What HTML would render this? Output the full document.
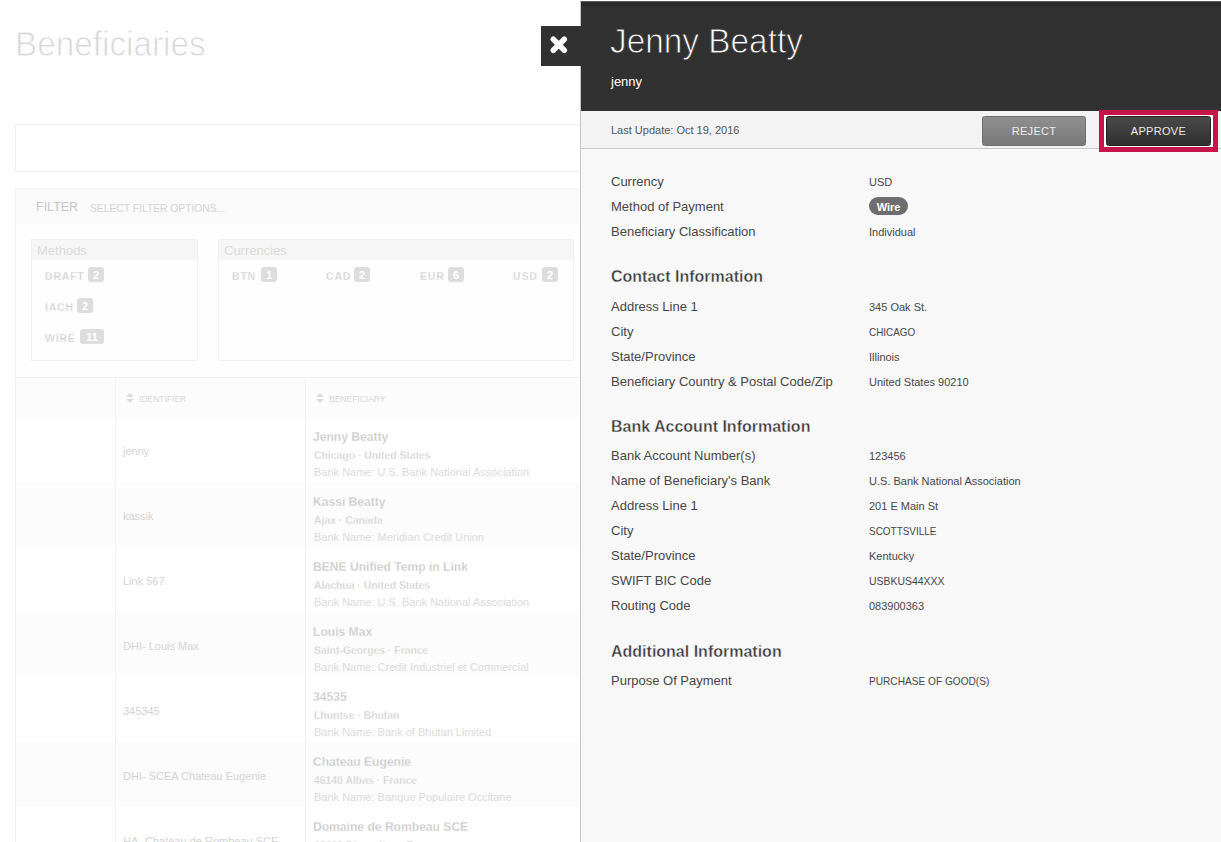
<!DOCTYPE html>
<html><head><meta charset="utf-8">
<style>
html,body{margin:0;padding:0;}
body{width:1221px;height:842px;overflow:hidden;position:relative;background:#fff;font-family:"Liberation Sans",sans-serif;-webkit-font-smoothing:antialiased;}
.a{position:absolute;}
.t{position:absolute;white-space:nowrap;}
.s9{font-size:9px;line-height:9px;}
.s11{font-size:11px;line-height:11px;}
.s13{font-size:13px;line-height:13px;}
.s16{font-size:16px;line-height:16px;}
.s33{font-size:33px;line-height:33px;}
/* panel */
#panel{position:absolute;left:580px;top:1px;width:641px;height:841px;background:#f8f8f8;border-left:1px solid #c6c6c6;box-sizing:border-box;}
.lab{color:#474747;font-size:13px;line-height:13px;position:absolute;left:611px;white-space:nowrap;}
.val{color:#474747;font-size:11px;line-height:11px;position:absolute;left:869px;white-space:nowrap;}
.hd{color:#383838;-webkit-text-stroke:0.35px #f8f8f8;font-size:16px;line-height:16px;font-weight:bold;position:absolute;left:611px;white-space:nowrap;}
.btn{position:absolute;top:116px;height:30px;box-sizing:border-box;border-radius:2.5px;color:#ececec;font-size:11px;line-height:28px;text-align:center;letter-spacing:0.3px;}
.idt{color:#d3d3d3;}
.bnm{color:#c8c8c8;font-weight:bold;-webkit-text-stroke:0.3px #fdfdfd;transform:scaleX(0.93);transform-origin:0 0;}
.bct{color:#cdcdcd;font-weight:bold;-webkit-text-stroke:0.35px #fdfdfd;transform:scaleX(0.945);transform-origin:0 0;}
.bbk{color:#dbdbdb;}
.flt{color:#d0d0d0;font-weight:bold;-webkit-text-stroke:0.3px #fefefe;font-size:10.5px;letter-spacing:0.8px;}
.bdg{position:absolute;height:15px;border-radius:3px;background:#dddddd;color:#fff;font-size:11px;line-height:17px;text-align:center;font-weight:bold;}
</style></head><body>

<!-- LEFT PAGE (faded) -->
<div class="t" style="left:15px;top:27px;color:#d6d6d6;font-size:34.5px;line-height:34px;transform:scaleX(0.965);-webkit-text-stroke:0.9px #fff;transform-origin:0 0;">Beneficiaries</div>
<div class="a" style="left:15px;top:124px;width:600px;height:48px;border:1px solid #f0f0f0;box-sizing:border-box;background:#fff;"></div>
<div class="a" style="left:15px;top:188px;width:600px;height:190px;border:1px solid #f3f3f3;box-sizing:border-box;background:#fdfdfd;"></div>
<div class="a" style="left:16px;top:189px;width:600px;height:35px;background:#fafafa;"></div>

<div class="t" style="left:36px;top:201px;font-size:12.5px;line-height:13px;color:#c6c6c6;">FILTER</div>
<div class="t" style="left:90px;top:203px;color:#d3d3d3;font-size:10.3px;line-height:11px;">SELECT FILTER OPTIONS...</div>
<!-- methods -->
<div class="a" style="left:31px;top:239px;width:167px;height:122px;border:1px solid #f0f0f0;box-sizing:border-box;background:#fefefe;"></div>
<div class="a" style="left:32px;top:240px;width:165px;height:20px;background:#f6f6f6;"></div>
<div class="t s13" style="left:37px;top:244px;color:#dadada;">Methods</div>
<div class="t s11 flt" style="left:45px;top:271px;">DRAFT</div><div class="bdg" style="left:88px;top:267px;width:16px;">2</div>
<div class="t s11 flt" style="left:45px;top:302px;">IACH</div><div class="bdg" style="left:77px;top:298px;width:16px;">2</div>
<div class="t s11 flt" style="left:45px;top:333px;">WIRE</div><div class="bdg" style="left:80px;top:329px;width:24px;">11</div>
<!-- currencies -->
<div class="a" style="left:218px;top:239px;width:356px;height:122px;border:1px solid #f0f0f0;box-sizing:border-box;background:#fefefe;"></div>
<div class="a" style="left:219px;top:240px;width:354px;height:20px;background:#f6f6f6;"></div>
<div class="t s13" style="left:224px;top:244px;color:#dadada;">Currencies</div>
<div class="t s11 flt" style="left:232px;top:271px;">BTN</div><div class="bdg" style="left:261px;top:267px;width:16px;">1</div>
<div class="t s11 flt" style="left:326px;top:271px;">CAD</div><div class="bdg" style="left:354px;top:267px;width:16px;">2</div>
<div class="t s11 flt" style="left:420px;top:271px;">EUR</div><div class="bdg" style="left:448px;top:267px;width:16px;">6</div>
<div class="t s11 flt" style="left:513px;top:271px;">USD</div><div class="bdg" style="left:542px;top:267px;width:16px;">2</div>

<!-- table -->
<div class="a" style="left:15px;top:377px;width:600px;height:41px;background:#fcfcfc;border-top:1px solid #f0f0f0;border-bottom:1px solid #eeeeee;box-sizing:border-box;"></div>
<div class="a" style="left:15px;top:417px;width:600px;height:65px;background:#fff;"></div>
<div class="a" style="left:15px;top:482px;width:600px;height:65px;background:#fcfcfc;"></div>
<div class="a" style="left:15px;top:547px;width:600px;height:65px;background:#fff;"></div>
<div class="a" style="left:15px;top:612px;width:600px;height:65px;background:#fcfcfc;"></div>
<div class="a" style="left:15px;top:677px;width:600px;height:65px;background:#fff;"></div>
<div class="a" style="left:15px;top:742px;width:600px;height:65px;background:#fcfcfc;"></div>
<div class="a" style="left:15px;top:807px;width:600px;height:65px;background:#fff;"></div>
<div class="a" style="left:15px;top:377px;width:1px;height:465px;background:#f0f0f0;"></div>
<div class="a" style="left:115px;top:377px;width:1px;height:465px;background:#f3f3f3;"></div>
<div class="a" style="left:305px;top:377px;width:1px;height:465px;background:#f3f3f3;"></div>
<div class="t s11 idt" style="left:123px;top:446px;">jenny</div>
<div class="t s13 bnm" style="left:313px;top:430px;">Jenny Beatty</div>
<div class="t s11 bct" style="left:314px;top:450px;">Chicago · United States</div>
<div class="t s11 bbk" style="left:314px;top:467px;">Bank Name: U.S. Bank National Association</div>
<div class="t s11 idt" style="left:123px;top:511px;">kassik</div>
<div class="t s13 bnm" style="left:313px;top:495px;">Kassi Beatty</div>
<div class="t s11 bct" style="left:314px;top:515px;">Ajax · Canada</div>
<div class="t s11 bbk" style="left:314px;top:532px;">Bank Name: Meridian Credit Union</div>
<div class="t s11 idt" style="left:123px;top:576px;">Link 567</div>
<div class="t s13 bnm" style="left:313px;top:560px;">BENE Unified Temp in Link</div>
<div class="t s11 bct" style="left:314px;top:580px;">Alachua · United States</div>
<div class="t s11 bbk" style="left:314px;top:597px;">Bank Name: U.S. Bank National Association</div>
<div class="t s11 idt" style="left:123px;top:641px;">DHI- Louis Max</div>
<div class="t s13 bnm" style="left:313px;top:625px;">Louis Max</div>
<div class="t s11 bct" style="left:314px;top:645px;">Saint-Georges · France</div>
<div class="t s11 bbk" style="left:314px;top:662px;">Bank Name: Credit Industriel et Commercial</div>
<div class="t s11 idt" style="left:123px;top:706px;">345345</div>
<div class="t s13 bnm" style="left:313px;top:690px;">34535</div>
<div class="t s11 bct" style="left:314px;top:710px;">Lhuntse · Bhutan</div>
<div class="t s11 bbk" style="left:314px;top:727px;">Bank Name: Bank of Bhutan Limited</div>
<div class="t s11 idt" style="left:123px;top:771px;">DHI- SCEA Chateau Eugenie</div>
<div class="t s13 bnm" style="left:313px;top:755px;">Chateau Eugenie</div>
<div class="t s11 bct" style="left:314px;top:775px;">46140 Albas · France</div>
<div class="t s11 bbk" style="left:314px;top:792px;">Bank Name: Banque Populaire Occitane</div>
<div class="t s11 idt" style="left:123px;top:836px;">HA- Chateau de Rombeau SCE</div>
<div class="t s13 bnm" style="left:313px;top:820px;">Domaine de Rombeau SCE</div>
<div class="t s11 bct" style="left:314px;top:840px;">66600 Rivesaltes · France</div>
<div class="t s11 bbk" style="left:314px;top:857px;">Bank Name: Credit Agricole</div>
<svg class="a" style="left:126px;top:393px;" width="8" height="10" viewBox="0 0 8 10"><path d="M4 0L8 4H0Z M0 6H8L4 10Z" fill="#dcdcdc"/></svg>
<div class="t s9" style="left:139px;top:395px;color:#d8d8d8;font-size:8.5px;">IDENTIFIER</div>
<svg class="a" style="left:316px;top:393px;" width="8" height="10" viewBox="0 0 8 10"><path d="M4 0L8 4H0Z M0 6H8L4 10Z" fill="#dcdcdc"/></svg>
<div class="t s9" style="left:329px;top:395px;color:#d8d8d8;font-size:8.5px;">BENEFICIARY</div>
<!-- RIGHT PANEL -->
<div id="panel"></div>
<div class="a" style="left:581px;top:1px;width:640px;height:110px;background:linear-gradient(#2a2a2a 0,#2a2a2a 4px,#313131 5px);border-top:1px solid #5e5e5e;box-sizing:border-box;"></div>
<div class="a" style="left:541px;top:26px;width:40px;height:40px;background:#313131;"></div>
<svg class="a" style="left:549px;top:35px;" width="20" height="20" viewBox="0 0 20 20"><path d="M4.3 4.25L15.3 15.25M15.3 4.25L4.3 15.25" stroke="#fff" stroke-width="5.5" stroke-linecap="round"/></svg>
<div class="a" style="left:581px;top:111px;width:640px;height:37px;background:#f3f3f3;border-bottom:1px solid #c6c6c6;"></div>

<div class="t" style="left:610px;top:24px;color:#fff;font-size:34.5px;line-height:34px;transform:scaleX(0.967);-webkit-text-stroke:0.9px #313131;transform-origin:0 0;">Jenny Beatty</div>
<div class="t s13" style="left:611px;top:75px;color:#fff;">jenny</div>
<div class="t s11" style="left:611px;top:125px;color:#555;">Last Update: Oct 19, 2016</div>

<div class="btn" style="left:982px;width:104px;background:linear-gradient(#8f8f8f,#797979);border:1px solid #6e6e6e;">REJECT</div>
<div class="a" style="left:1099px;top:110px;width:119px;height:42px;border:5px solid #c4154a;box-sizing:border-box;background:#fff;"></div>
<div class="btn" style="left:1106px;width:105px;background:linear-gradient(#4a4a4a,#2e2e2e);border:1px solid #222;">APPROVE</div>

<div class="lab" style="top:175px;">Currency</div>
<div class="lab" style="top:200px;">Method of Payment</div>
<div class="lab" style="top:225px;">Beneficiary Classification</div>
<div class="val" style="top:177px;">USD</div>
<div class="a" style="left:869px;top:197px;width:39px;height:18px;border-radius:9px;background:#6e6e6e;"></div>
<div class="t" style="left:869px;top:202px;width:39px;text-align:center;color:#fff;font-size:11px;line-height:11px;font-weight:bold;">Wire</div>
<div class="val" style="top:227px;">Individual</div>

<div class="hd" style="top:269px;">Contact Information</div>
<div class="lab" style="top:300px;">Address Line 1</div>
<div class="lab" style="top:325px;">City</div>
<div class="lab" style="top:350px;">State/Province</div>
<div class="lab" style="top:375px;">Beneficiary Country &amp; Postal Code/Zip</div>
<div class="val" style="top:302px;">345 Oak St.</div>
<div class="val" style="top:327px;transform:scaleX(0.9);transform-origin:0 0;">CHICAGO</div>
<div class="val" style="top:352px;">Illinois</div>
<div class="val" style="top:377px;">United States 90210</div>

<div class="hd" style="top:419px;">Bank Account Information</div>
<div class="lab" style="top:449px;">Bank Account Number(s)</div>
<div class="lab" style="top:474px;">Name of Beneficiary's Bank</div>
<div class="lab" style="top:499px;">Address Line 1</div>
<div class="lab" style="top:524px;">City</div>
<div class="lab" style="top:549px;">State/Province</div>
<div class="lab" style="top:574px;">SWIFT BIC Code</div>
<div class="lab" style="top:599px;">Routing Code</div>
<div class="val" style="top:451px;">123456</div>
<div class="val" style="top:476px;">U.S. Bank National Association</div>
<div class="val" style="top:501px;">201 E Main St</div>
<div class="val" style="top:526px;transform:scaleX(0.905);transform-origin:0 0;">SCOTTSVILLE</div>
<div class="val" style="top:551px;">Kentucky</div>
<div class="val" style="top:576px;transform:scaleX(0.95);transform-origin:0 0;">USBKUS44XXX</div>
<div class="val" style="top:601px;">083900363</div>

<div class="hd" style="top:644px;">Additional Information</div>
<div class="lab" style="top:674px;">Purpose Of Payment</div>
<div class="val" style="top:676px;transform:scaleX(0.92);transform-origin:0 0;">PURCHASE OF GOOD(S)</div>

</body></html>
